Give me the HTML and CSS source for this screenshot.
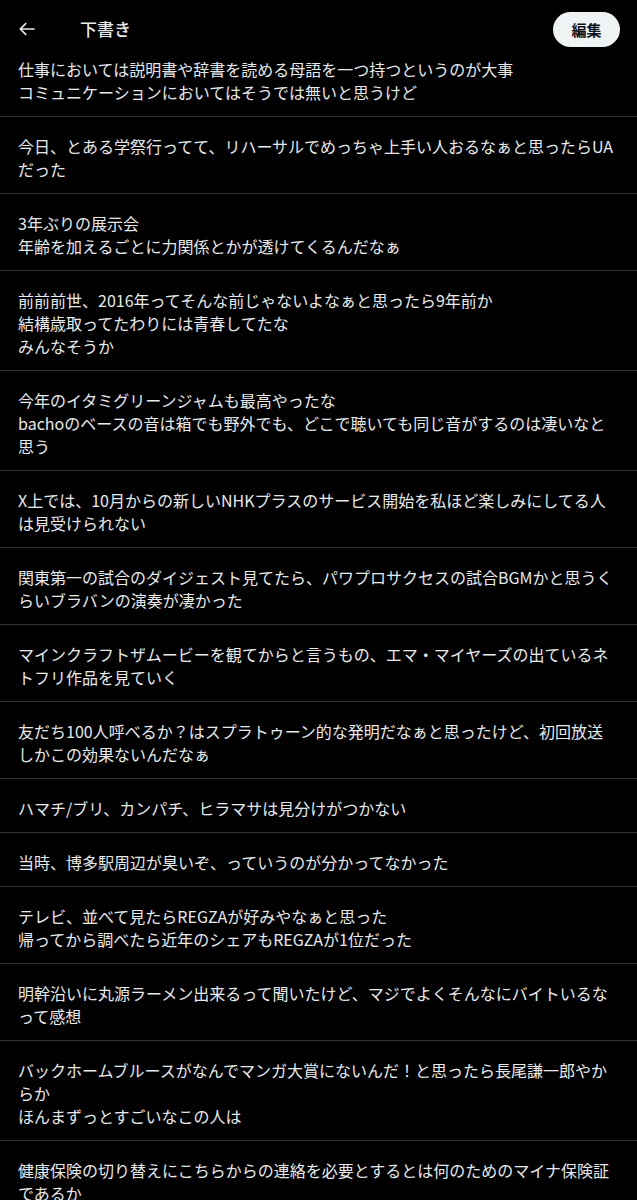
FILE: index.html
```html
<!DOCTYPE html>
<html lang="ja">
<head>
<meta charset="utf-8">
<title>下書き</title>
<link rel="stylesheet" href="styles.css">
</head>
<body>
<header class="topbar">
  <div class="left">
    <span class="back">
      <svg width="20" height="20" viewBox="0 0 24 24"><path d="M21 12H4M11 5l-7 7 7 7" fill="none" stroke="#e7e9ea" stroke-width="2"/></svg>
    </span>
    <h1 class="title">下書き</h1>
  </div>
  <button class="edit">編集</button>
</header>
<ul class="drafts">
  <li class="draft first">仕事においては説明書や辞書を読める母語を一つ持つというのが大事<br>コミュニケーションにおいてはそうでは無いと思うけど</li>
  <li class="draft">今日、とある学祭行ってて、リハーサルでめっちゃ上手い人おるなぁと思ったらUAだった</li>
  <li class="draft">3年ぶりの展示会<br>年齢を加えるごとに力関係とかが透けてくるんだなぁ</li>
  <li class="draft">前前前世、2016年ってそんな前じゃないよなぁと思ったら9年前か<br>結構歳取ってたわりには青春してたな<br>みんなそうか</li>
  <li class="draft">今年のイタミグリーンジャムも最高やったな<br>bachoのベースの音は箱でも野外でも、どこで聴いても同じ音がするのは凄いなと思う</li>
  <li class="draft">X上では、10月からの新しいNHKプラスのサービス開始を私ほど楽しみにしてる人は見受けられない</li>
  <li class="draft">関東第一の試合のダイジェスト見てたら、パワプロサクセスの試合BGMかと思うくらいブラバンの演奏が凄かった</li>
  <li class="draft">マインクラフトザムービーを観てからと言うもの、エマ・マイヤーズの出ているネトフリ作品を見ていく</li>
  <li class="draft">友だち100人呼べるか？はスプラトゥーン的な発明だなぁと思ったけど、初回放送しかこの効果ないんだなぁ</li>
  <li class="draft">ハマチ/ブリ、カンパチ、ヒラマサは見分けがつかない</li>
  <li class="draft">当時、博多駅周辺が臭いぞ、っていうのが分かってなかった</li>
  <li class="draft">テレビ、並べて見たらREGZAが好みやなぁと思った<br>帰ってから調べたら近年のシェアもREGZAが1位だった</li>
  <li class="draft">明幹沿いに丸源ラーメン出来るって聞いたけど、マジでよくそんなにバイトいるなって感想</li>
  <li class="draft">バックホームブルースがなんでマンガ大賞にないんだ！と思ったら長尾謙一郎やからか<br>ほんまずっとすごいなこの人は</li>
  <li class="draft">健康保険の切り替えにこちらからの連絡を必要とするとは何のためのマイナ保険証であるか</li>
</ul>
</body>
</html>
```

FILE: styles.css
```css
* { box-sizing: border-box; }
html, body {
  margin: 0;
  padding: 0;
  background: #000;
}
body {
  font-family: "Noto Sans CJK JP", "Noto Sans", sans-serif;
  color: #e7e9ea;
  width: 637px;
  overflow: hidden;
}
.topbar {
  height: 58px;
  display: flex;
  align-items: center;
  justify-content: space-between;
  padding: 0 17px 0 17px;
}
.left {
  display: flex;
  align-items: center;
}
.back {
  display: flex;
  width: 20px;
  height: 20px;
  align-items: center;
  justify-content: center;
}
.title {
  margin: 0 0 0 43px;
  font-size: 17px;
  font-weight: 500;
  line-height: 22px;
  color: #e7e9ea;
}
.edit {
  font-family: "Noto Sans CJK JP", sans-serif;
  background: #eff3f4;
  color: #0f1419;
  border: none;
  border-radius: 18px;
  height: 35px;
  width: 67px;
  font-size: 15px;
  font-weight: 700;
  padding: 0;
}
.drafts {
  list-style: none;
  margin: 0;
  padding: 0;
}
.draft {
  font-size: 16px;
  line-height: 23px;
  padding: 18px 19px 12px 18px;
  border-bottom: 1px solid #2f3336;
}
.draft.first {
  padding-top: 0;
}
```
